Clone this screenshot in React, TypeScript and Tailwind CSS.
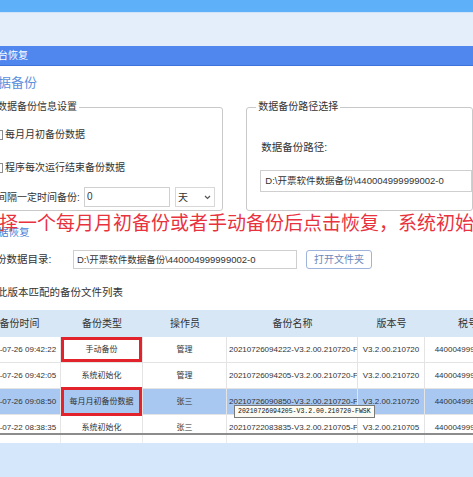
import React from 'react'

interface BackupRow {
  time: string
  type: string
  op: string
  name: string
  ver: string
  tax: string
  boxed?: boolean
  selected?: boolean
}

const rows: BackupRow[] = [
  { time: '2021-07-26 09:42:22', type: '手动备份', op: '管理', name: '20210726094222-V3.2.00.210720-FWSK', ver: 'V3.2.00.210720', tax: '440004999999002', boxed: true },
  { time: '2021-07-26 09:42:05', type: '系统初始化', op: '管理', name: '20210726094205-V3.2.00.210720-FWSK', ver: 'V3.2.00.210720', tax: '440004999999002' },
  { time: '2021-07-26 09:08:50', type: '每月月初备份数据', op: '张三', name: '20210726090850-V3.2.00.210720-FWSK', ver: 'V3.2.00.210720', tax: '440004999999002', boxed: true, selected: true },
  { time: '2021-07-22 08:38:35', type: '系统初始化', op: '张三', name: '20210722083835-V3.2.00.210705-FWSK', ver: 'V3.2.00.210705', tax: '440004999999002' },
]

function Checkbox() {
  return <span className="w-[10px] h-[10px] border border-[#8d8d8d] bg-white shrink-0" />
}

export default function App() {
  return (
    <div className="relative w-[473px] h-[477px] overflow-hidden bg-white text-[#333] font-['Liberation_Sans','Noto_Sans_CJK_SC',sans-serif]">
      {/* window chrome */}
      <div className="h-[12px] bg-[#5eb1f8]" />
      <div className="h-[34px] bg-[#e3eefa] border-t border-[#d0e3f8]" />
      <div className="h-[20px] bg-[#4f87ef] border-b border-[#3d73d8] text-white text-[10px] leading-[19px] -ml-[2px]">
        台恢复
      </div>

      <div className="h-[34px] pt-[9px] text-[13px] leading-[16px] text-[#5b90dc] -ml-[2px]">据备份</div>

      {/* settings */}
      <div className="flex -ml-[10px]">
        <fieldset className="w-[247px] border border-[#c9c9c9] rounded-[3px] pb-[3px]">
          <legend className="ml-[4px] px-[2px] text-[10px] leading-[14px]">数据备份信息设置</legend>
          <div className="mt-[15px] ml-[2px] flex items-center h-[12px]">
            <Checkbox />
            <span className="ml-[2px] text-[10px] leading-[12px]">每月月初备份数据</span>
          </div>
          <div className="mt-[21px] ml-[2px] flex items-center h-[12px]">
            <Checkbox />
            <span className="ml-[2px] text-[10px] leading-[12px]">程序每次运行结束备份数据</span>
          </div>
          <div className="mt-[13px] ml-[6px] flex items-center h-[20px]">
            <span className="w-[87px] text-[10px] whitespace-nowrap">间隔一定时间备份:</span>
            <div className="w-[86px] h-[20px] border border-[#d0d0d0] pl-[2px] text-[10px] leading-[18px]">0</div>
            <div className="ml-[5px] w-[40px] h-[20px] border border-[#d8d8d8] flex items-center justify-between pl-[2px] pr-[3px] text-[10px]">
              <span>天</span>
              <svg width="7" height="5" viewBox="0 0 7 5">
                <path d="M1 1l2.5 2.5L6 1" stroke="#555" fill="none" strokeWidth="1.2" />
              </svg>
            </div>
          </div>
        </fieldset>

        <fieldset className="ml-[23px] w-[240px] border border-[#c9c9c9] rounded-[3px] pb-[18px]">
          <legend className="ml-[9px] px-[2px] text-[10px] leading-[14px]">数据备份路径选择</legend>
          <div className="mt-[27px] pl-[14px] text-[10.5px] leading-[12px]">数据备份路径:</div>
          <div className="mt-[17px] ml-[13px] h-[22px] border border-[#cfcfcf] pl-[4px] text-[9.5px] leading-[20px] whitespace-nowrap">
            D:\开票软件数据备份\440004999999002-0
          </div>
        </fieldset>
      </div>

      {/* restore */}
      <div className="mt-[15px] -ml-[2px] text-[10.5px] leading-[12px] text-[#4b7fd6]">据恢复</div>

      <div className="mt-[12px] flex items-center h-[19px] -ml-[4px]">
        <span className="w-[77px] text-[10.5px] whitespace-nowrap">份数据目录:</span>
        <div className="w-[224px] h-[19px] border border-[#cfcfcf] pl-[3px] text-[9.5px] leading-[17px] whitespace-nowrap overflow-hidden">
          D:\开票软件数据备份\440004999999002-0
        </div>
        <button className="ml-[9px] w-[66px] h-[19px] border border-[#9fb4dc] rounded-[3px] text-[10px] leading-[17px] text-[#6c89bd] bg-white">
          打开文件夹
        </button>
      </div>

      <div className="mt-[17px] -ml-[3px] text-[10.5px] leading-[12px]">此版本匹配的备份文件列表</div>

      {/* table */}
      <div className="mt-[12px] -ml-[22px] w-[533px]">
        <div className="flex h-[27px] bg-[#d7e7f6] text-[10px] leading-[27px] text-center">
          <div className="w-[83px]">备份时间</div>
          <div className="w-[82px]">备份类型</div>
          <div className="w-[84px]">操作员</div>
          <div className="w-[131px]">备份名称</div>
          <div className="w-[67px]">版本号</div>
          <div className="w-[86px]">税号</div>
        </div>
        <div className="h-[96px] overflow-hidden">
          {rows.map((r) => (
            <div
              key={r.time}
              className={`flex h-[26px] border-b border-[#e4e4e4] text-[8px] leading-[25px] text-center whitespace-nowrap ${r.selected ? 'bg-[#a8c8f1]' : 'bg-white'}`}
            >
              <div className="w-[83px] border-r border-[#e4e4e4]">{r.time}</div>
              <div className="relative w-[82px] border-r border-[#e4e4e4]">
                {r.type}
                {r.boxed && (
                  <span className={`absolute border-[3px] border-[#e2232b] ${r.selected ? '-inset-y-[2px] inset-x-0' : 'inset-0'}`} />
                )}
              </div>
              <div className="w-[84px] border-r border-[#e4e4e4]">{r.op}</div>
              <div className="w-[131px] border-r border-[#e4e4e4] overflow-hidden text-left pl-[2px]">{r.name}</div>
              <div className="w-[67px] border-r border-[#e4e4e4]">{r.ver}</div>
              <div className="w-[86px]">{r.tax}</div>
            </div>
          ))}
        </div>
        <div className="flex h-[10px] border-t-2 border-[#8c8c8c] bg-white">
          <div className="w-[83px] border-r border-[#ececec]" />
          <div className="w-[82px] border-r border-[#ececec]" />
          <div className="w-[84px] border-r border-[#ececec]" />
          <div className="w-[131px] border-r border-[#ececec]" />
          <div className="w-[67px] border-r border-[#ececec]" />
        </div>
      </div>
      <div className="h-[40px] bg-[#d5e7fb]" />

      {/* annotation over the screenshot */}
      <div className="absolute left-[-1px] top-[212px] text-[19px] leading-[24px] text-[#e8333f] whitespace-nowrap">
        择一个每月月初备份或者手动备份后点击恢复，系统初始化
      </div>

      {/* tooltip */}
      <div className="absolute left-[234px] top-[405px] h-[13px] px-[3px] border border-[#7a7a7a] bg-[#fbfbf3] text-[6.5px] leading-[11px] text-[#111] font-['Liberation_Mono',monospace] whitespace-nowrap">
        20210726094205-V3.2.00.210720-FWSK
      </div>
    </div>
  )
}
